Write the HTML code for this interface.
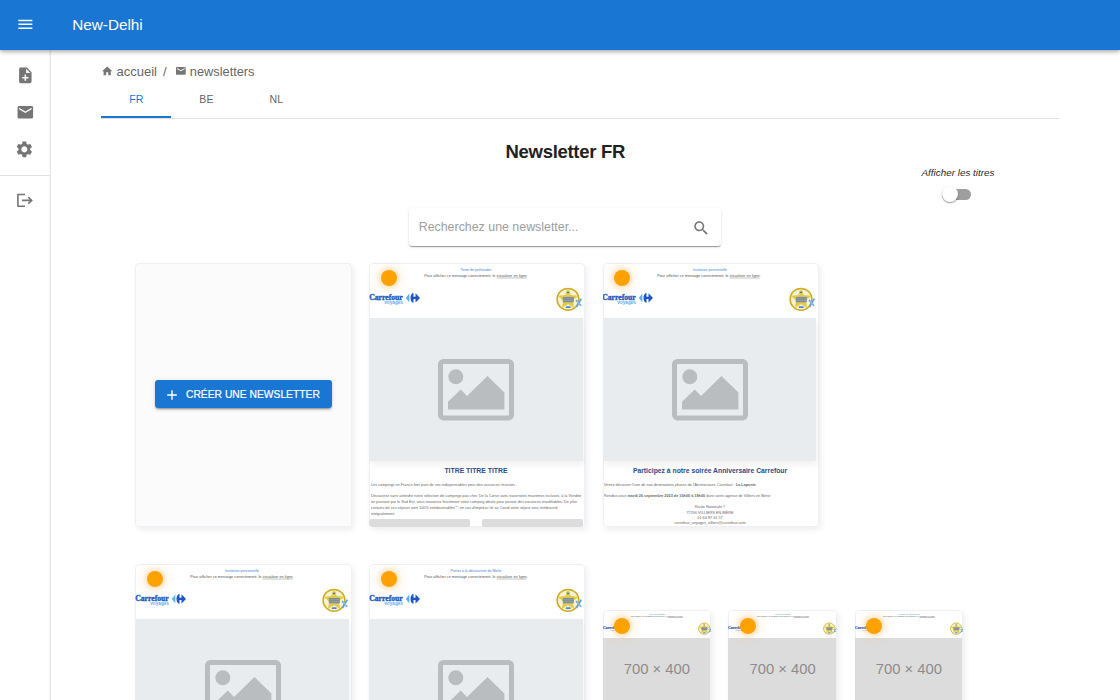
<!DOCTYPE html>
<html><head><meta charset="utf-8">
<style>
*{box-sizing:border-box;margin:0;padding:0}
html,body{width:1120px;height:700px;overflow:hidden;background:#fff;font-family:"Liberation Sans",sans-serif;position:relative}
.a{position:absolute}
.t{position:absolute;white-space:nowrap;line-height:1}
#appbar{left:0;top:0;width:1120px;height:49.7px;background:#1976d2;box-shadow:0 2px 3px -1px rgba(0,0,0,.18),0 3px 4px 0 rgba(0,0,0,.12),0 1px 7px 0 rgba(0,0,0,.1);z-index:5}
#side{left:0;top:49px;width:51px;height:651px;border-right:1px solid #e9e9e9;background:#fff;box-shadow:inset -1px 0 0 #f5f5f5}
.ico{position:absolute;fill:#757575}
.card{position:absolute;border-radius:4px;background:#fff;box-shadow:2px 3px 6px rgba(0,0,0,.07);overflow:hidden}
.card::before{content:"";position:absolute;left:0;top:0;right:0;bottom:0;border:1px solid #edf0f4;border-radius:4px;pointer-events:none}
.dot{position:absolute;width:16px;height:16px;border-radius:50%;background:#ffa200;box-shadow:0 0 3px 3px rgba(255,175,70,.2),0 0 8px 7px rgba(255,185,100,.11)}
</style></head><body>

<div id="appbar" class="a">
  <svg class="ico" style="left:15.6px;top:15.4px;fill:#fff" width="18.7" height="18.7" viewBox="0 0 24 24"><path d="M3 18h18v-2H3v2zm0-5h18v-2H3v2zm0-7v2h18V6H3z"/></svg>
  <div class="t" style="left:72.2px;top:17.2px;font-size:15.3px;color:#fff">New-Delhi</div>
</div>

<div id="side" class="a">
  <svg class="ico" style="left:15.6px;top:16.6px" width="18.7" height="18.7" viewBox="0 0 24 24"><path d="M14 2H6c-1.1 0-1.99.9-1.99 2L4 20c0 1.1.89 2 1.99 2H18c1.1 0 2-.9 2-2V8l-6-6zm2 14h-3v3h-2v-3H8v-2h3v-3h2v3h3v2zm-3-7V3.5L18.5 9H13z"/></svg>
  <svg class="ico" style="left:15.6px;top:54.1px" width="18.7" height="18.7" viewBox="0 0 24 24"><path d="M20 4H4c-1.1 0-1.99.9-1.99 2L2 18c0 1.1.9 2 2 2h16c1.1 0 2-.9 2-2V6c0-1.1-.9-2-2-2zm0 4l-8 5-8-5V6l8 5 8-5v2z"/></svg>
  <svg class="ico" style="left:15.3px;top:91.2px" width="18.7" height="18.7" viewBox="0 0 24 24"><path d="M19.43 12.98c.04-.32.07-.64.07-.98s-.03-.66-.07-.98l2.11-1.65c.19-.15.24-.42.12-.64l-2-3.46c-.12-.22-.39-.3-.61-.22l-2.49 1c-.52-.4-1.08-.73-1.69-.98l-.38-2.65C14.460 2.18 14.25 2 14 2h-4c-.25 0-.46.18-.49.42l-.38 2.65c-.61.25-1.17.59-1.69.98l-2.49-1c-.23-.09-.49 0-.61.22l-2 3.46c-.13.22-.07.49.12.64l2.11 1.65c-.04.32-.07.65-.07.98s.03.66.07.98l-2.11 1.65c-.19.15-.24.42-.12.64l2 3.46c.12.22.39.3.61.22l2.49-1c.52.4 1.080.73 1.69.98l.38 2.65c.03.24.24.42.49.42h4c.25 0 .46-.18.49-.42l.38-2.65c.61-.25 1.17-.59 1.69-.98l2.49 1c.23.09.49 0 .61-.22l2-3.46c.12-.22.07-.49-.12-.64l-2.11-1.65zM12 15.9c-2.15 0-3.9-1.75-3.9-3.9s1.75-3.9 3.9-3.9 3.9 1.75 3.9 3.9-1.75 3.9-3.9 3.9z"/></svg>
  <div class="a" style="left:0;top:126px;width:50px;height:1px;background:#e0e0e0"></div>
  <svg class="a" style="left:15px;top:142px" width="20" height="18" viewBox="0 0 20 18" fill="none" stroke="#757575" stroke-width="1.6"><path d="M10 3.5H2.9V15.3H10" stroke-linejoin="round"/><path d="M7 9.4H16.6M13.3 6l3.4 3.4-3.4 3.4"/></svg>
</div>

<!-- breadcrumb -->
<svg class="ico" style="left:101.1px;top:65.1px" width="12.4" height="12.4" viewBox="0 0 24 24"><path d="M10 20v-6h4v6h5v-8h3L12 3 2 12h3v8z"/></svg>
<div class="t" style="left:116.5px;top:64.6px;font-size:13px;color:#666">accueil</div>
<div class="t" style="left:163px;top:64.8px;font-size:13px;color:#666">/</div>
<svg class="ico" style="left:175px;top:65.4px" width="11.7" height="11.7" viewBox="0 0 24 24"><path d="M20 4H4c-1.1 0-1.99.9-1.99 2L2 18c0 1.1.9 2 2 2h16c1.1 0 2-.9 2-2V6c0-1.1-.9-2-2-2zm0 4l-8 5-8-5V6l8 5 8-5v2z"/></svg>
<div class="t" style="left:189.8px;top:65.5px;font-size:12.8px;color:#666">newsletters</div>

<!-- tabs -->
<div class="t" style="left:129.3px;top:94px;font-size:10.6px;letter-spacing:0.1px;color:#1976d2">FR</div>
<div class="t" style="left:199.3px;top:94px;font-size:10.6px;letter-spacing:0.1px;color:#666">BE</div>
<div class="t" style="left:269.5px;top:94px;font-size:10.6px;letter-spacing:0.1px;color:#666">NL</div>
<div class="a" style="left:101px;top:118px;width:958px;height:1px;background:#e0e0e0"></div>
<div class="a" style="left:101px;top:116px;width:70px;height:2px;background:#1976d2"></div>

<!-- title -->
<div class="t" style="left:505.5px;top:142.5px;font-size:18.5px;font-weight:bold;color:#212121;letter-spacing:-0.3px">Newsletter FR</div>

<!-- toggle -->
<div class="t" style="left:921.5px;top:167.9px;font-size:9.9px;font-style:italic;color:#2a2a2a">Afficher les titres</div>
<div class="a" style="left:942px;top:189px;width:29px;height:11px;border-radius:6px;background:#9e9e9e"></div>
<div class="a" style="left:942px;top:186.3px;width:16px;height:16px;border-radius:50%;background:#fff;box-shadow:0 1px 2px rgba(0,0,0,.3),0 1px 1px rgba(0,0,0,.14)"></div>

<!-- search -->
<div class="a" style="left:409px;top:208.2px;width:312px;height:38.3px;border-radius:3px;background:#fff;box-shadow:0 2px 1px -1px rgba(0,0,0,.24),0 1px 1px 0 rgba(0,0,0,.14),0 1px 3px 0 rgba(0,0,0,.12)"></div>
<div class="t" style="left:418.7px;top:221.3px;font-size:12.4px;color:#9e9e9e">Recherchez une newsletter...</div>
<svg class="ico" style="left:691.7px;top:218.6px" width="18.4" height="18.4" viewBox="0 0 24 24"><path d="M15.5 14h-.79l-.28-.27C15.41 12.59 16 11.11 16 9.5 16 5.91 13.09 3 9.5 3S3 5.91 3 9.5 5.91 16 9.5 16c1.61 0 3.09-.59 4.23-1.57l.27.28v.79l5 4.99L20.49 19l-4.99-5zm-6 0C7.01 14 5 11.99 5 9.5S7.01 5 9.5 5 14 7.01 14 9.5 11.99 14 9.5 14z"/></svg>

<!-- cards row 1 -->
<div class="card" style="left:135px;top:262.5px;width:216.5px;height:264px;background:#fbfbfb"></div>
<div class="a" style="left:155px;top:380.3px;width:177px;height:28.2px;border-radius:3px;background:#1976d2;box-shadow:0 3px 1px -2px rgba(0,0,0,.2),0 2px 2px 0 rgba(0,0,0,.14),0 1px 5px 0 rgba(0,0,0,.12)"></div>
<svg class="a" style="left:166px;top:389px" width="12" height="12" viewBox="0 0 12 12"><path d="M6 1.2v9.6M1.2 6h9.6" stroke="#fff" stroke-width="1.4"/></svg>
<div class="t" style="left:186px;top:390px;font-size:10.3px;color:#fff;letter-spacing:0px;-webkit-text-stroke:0.2px #fff">CRÉER UNE NEWSLETTER</div>

<div id="cards">
<div class="card" style="left:369.2px;top:262.5px;width:216px;height:264px">
<div class="t" style="left:-43px;width:1200px;text-align:center;top:5.2px;font-size:14.4px;color:#3b7fd9;transform-origin:0 0;transform:scale(0.25);">Texte de préheader</div>
<div class="t" style="left:-43.5px;width:1200px;text-align:center;top:11.1px;font-size:15.2px;color:#555;transform-origin:0 0;transform:scale(0.25);">Pour afficher ce message correctement, le <u style="text-decoration-thickness:1.6px;text-underline-offset:1.5px;text-decoration-color:#888">visualiser en ligne</u>.</div>
<svg class="a" style="left:-0.5px;top:29.5px" width="53.0" height="14.0" viewBox="0 0 53 14">
<text x="0.2" y="7.5" font-family="Liberation Serif" font-weight="bold" font-size="7.4" fill="#2459bf" stroke="#2459bf" stroke-width="0.35" textLength="33.6" lengthAdjust="spacingAndGlyphs">Carrefour</text>
<text x="15.2" y="11.8" font-family="Liberation Sans" font-weight="bold" font-size="5" fill="#62adf2" textLength="18.8" lengthAdjust="spacingAndGlyphs">voyages</text>
<path d="M40.3 1.5 L36.8 5.9 L40.3 10.2 Z" fill="#5aaef2"/>
<path d="M44.5 0.8 C42.2 1.6 41.5 4 41.5 5.9 C41.5 8 42.2 10.2 44.5 10.8 L44.5 7 L46.5 7 L46.5 10.6 L51 5.9 L46.5 1.2 L46.5 4.8 L44.5 4.8 Z" fill="#1f55c8"/>
</svg>
<svg class="a" style="left:186.5px;top:24.700000000000003px" width="27.0" height="24" viewBox="-0.5 -0.5 27 24">
<circle cx="11.5" cy="11.8" r="10.9" fill="#f8f1d2" stroke="#cdab1e" stroke-width="1.5"/>
<path d="M11.5 0.6 L14.3 7.6 L21.8 8.3 L16.2 13.2 L17.8 20.6 L11.5 16.8 L5.2 20.6 L6.8 13.2 L1.2 8.3 L8.7 7.6 Z" fill="#e2cd4a"/>
<path d="M9.6 4.3 h3.8 l-1.9 1.6z" fill="#4a6fb0"/>
<rect x="6.3" y="9.4" width="11" height="5.4" fill="#7d8ca5"/>
<path d="M6.3 11.2h11M6.3 13h11" stroke="#c9c070" stroke-width="0.5" opacity=".7"/>
<rect x="9.3" y="18.8" width="4.8" height="1.7" rx="0.5" fill="#4b86dc"/>
<path d="M19.6 12.6 L24.6 18.2 M24.8 11.2 L20 19.6" stroke="#5aa4ec" stroke-width="1.7"/>
<path d="M20.2 13.4 L24 17.6" stroke="#fff" stroke-width="0.5"/>
</svg>
<div class="a" style="left:0px;top:55.2px;width:213.5px;height:143.8px;background:#e9ecef;box-shadow:1px 4px 7px rgba(0,0,0,.06)"></div>
<svg class="a" style="left:69.1px;top:96.8px" width="76" height="61.4" viewBox="0 0 76 61.4">
<rect x="2.5" y="2.5" width="71" height="56.4" rx="3" fill="none" stroke="#babdc0" stroke-width="5"/>
<circle cx="17.8" cy="17.8" r="7.5" fill="#babdc0"/>
<path d="M10 42.7 L22.8 30.6 L29 37 L49.5 17 L66.4 33.5 L66.4 50.6 L10 50.6 Z" fill="#babdc0"/>
</svg>
<div class="t" style="left:-43.5px;width:1200px;text-align:center;top:204.75px;font-size:27.6px;color:#2b4a8a;transform-origin:0 0;transform:scale(0.25);font-weight:bold;letter-spacing:-0.1px">TITRE TITRE TITRE</div>
<div class="t" style="left:1.5px;top:220.7px;font-size:15.2px;color:#666;transform-origin:0 0;transform:scale(0.25);">Les campings en France font parti de vos indispensables pour des vacances réussies .</div>
<div class="t" style="left:1.5px;top:231.5px;font-size:15.2px;color:#666;transform-origin:0 0;transform:scale(0.25);">Découvrez sans attendre notre sélection de campings pas cher. De la Corse avec traversées maritimes incluses, à la Vendée</div>
<div class="t" style="left:1.5px;top:237.2px;font-size:15.2px;color:#666;transform-origin:0 0;transform:scale(0.25);">en passant par le Sud Est, vous trouverez forcément votre camping idéale pour passer des vacances inoubliables. De plus</div>
<div class="t" style="left:1.5px;top:243.3px;font-size:15.2px;color:#666;transform-origin:0 0;transform:scale(0.25);">certains de ces séjours sont 100% remboursables<span style='font-size:60%;vertical-align:top;line-height:0'>(2)</span>, en cas d'imprévu lié au Covid votre séjour sera remboursé</div>
<div class="t" style="left:1.5px;top:249.1px;font-size:15.2px;color:#666;transform-origin:0 0;transform:scale(0.25);">intégralement.</div>
<div class="a" style="left:0;top:256.8px;width:101px;height:8px;border-radius:2px;background:#dcdcdc"></div>
<div class="a" style="left:112.4px;top:256.8px;width:101.5px;height:8px;border-radius:2px;background:#dcdcdc"></div>
<div class="dot" style="left:11.5px;top:7.300000000000001px"></div>
</div>
<div class="card" style="left:602.5px;top:262.5px;width:216px;height:264px">
<div class="t" style="left:-43px;width:1200px;text-align:center;top:5.2px;font-size:14.4px;color:#3b7fd9;transform-origin:0 0;transform:scale(0.25);">Invitation personnelle</div>
<div class="t" style="left:-43.5px;width:1200px;text-align:center;top:11.1px;font-size:15.2px;color:#555;transform-origin:0 0;transform:scale(0.25);">Pour afficher ce message correctement, le <u style="text-decoration-thickness:1.6px;text-underline-offset:1.5px;text-decoration-color:#888">visualiser en ligne</u>.</div>
<svg class="a" style="left:-0.5px;top:29.5px" width="53.0" height="14.0" viewBox="0 0 53 14">
<text x="0.2" y="7.5" font-family="Liberation Serif" font-weight="bold" font-size="7.4" fill="#2459bf" stroke="#2459bf" stroke-width="0.35" textLength="33.6" lengthAdjust="spacingAndGlyphs">Carrefour</text>
<text x="15.2" y="11.8" font-family="Liberation Sans" font-weight="bold" font-size="5" fill="#62adf2" textLength="18.8" lengthAdjust="spacingAndGlyphs">voyages</text>
<path d="M40.3 1.5 L36.8 5.9 L40.3 10.2 Z" fill="#5aaef2"/>
<path d="M44.5 0.8 C42.2 1.6 41.5 4 41.5 5.9 C41.5 8 42.2 10.2 44.5 10.8 L44.5 7 L46.5 7 L46.5 10.6 L51 5.9 L46.5 1.2 L46.5 4.8 L44.5 4.8 Z" fill="#1f55c8"/>
</svg>
<svg class="a" style="left:186.5px;top:24.700000000000003px" width="27.0" height="24" viewBox="-0.5 -0.5 27 24">
<circle cx="11.5" cy="11.8" r="10.9" fill="#f8f1d2" stroke="#cdab1e" stroke-width="1.5"/>
<path d="M11.5 0.6 L14.3 7.6 L21.8 8.3 L16.2 13.2 L17.8 20.6 L11.5 16.8 L5.2 20.6 L6.8 13.2 L1.2 8.3 L8.7 7.6 Z" fill="#e2cd4a"/>
<path d="M9.6 4.3 h3.8 l-1.9 1.6z" fill="#4a6fb0"/>
<rect x="6.3" y="9.4" width="11" height="5.4" fill="#7d8ca5"/>
<path d="M6.3 11.2h11M6.3 13h11" stroke="#c9c070" stroke-width="0.5" opacity=".7"/>
<rect x="9.3" y="18.8" width="4.8" height="1.7" rx="0.5" fill="#4b86dc"/>
<path d="M19.6 12.6 L24.6 18.2 M24.8 11.2 L20 19.6" stroke="#5aa4ec" stroke-width="1.7"/>
<path d="M20.2 13.4 L24 17.6" stroke="#fff" stroke-width="0.5"/>
</svg>
<div class="a" style="left:0px;top:55.2px;width:213.5px;height:143.8px;background:#e9ecef;box-shadow:1px 4px 7px rgba(0,0,0,.06)"></div>
<svg class="a" style="left:69.1px;top:96.8px" width="76" height="61.4" viewBox="0 0 76 61.4">
<rect x="2.5" y="2.5" width="71" height="56.4" rx="3" fill="none" stroke="#babdc0" stroke-width="5"/>
<circle cx="17.8" cy="17.8" r="7.5" fill="#babdc0"/>
<path d="M10 42.7 L22.8 30.6 L29 37 L49.5 17 L66.4 33.5 L66.4 50.6 L10 50.6 Z" fill="#babdc0"/>
</svg>
<div class="t" style="left:-42.8px;width:1200px;text-align:center;top:204.79999999999998px;font-size:27.2px;color:#2b4a8a;transform-origin:0 0;transform:scale(0.25);font-weight:bold">Participez à notre soirée Anniversaire Carrefour</div>
<div class="t" style="left:1.9px;top:220.8px;font-size:15.2px;color:#666;transform-origin:0 0;transform:scale(0.25);">Venez découvrir l'une de nos destinations phares de l'Anniversaire Carrefour : <b>La Laponie</b></div>
<div class="t" style="left:1.9px;top:231.5px;font-size:15.2px;color:#666;transform-origin:0 0;transform:scale(0.25);">Rendez-vous <b>mardi 26 septembre 2023 de 16h00 à 18h00</b> dans votre agence de Villiers en Bière :</div>
<div class="t" style="left:-42.5px;width:1200px;text-align:center;top:242.79999999999998px;font-size:15.2px;color:#666;transform-origin:0 0;transform:scale(0.25);">Route Nationale 7</div>
<div class="t" style="left:-42.5px;width:1200px;text-align:center;top:248.2px;font-size:15.2px;color:#666;transform-origin:0 0;transform:scale(0.25);">77190 VILLIERS EN BIÈRE</div>
<div class="t" style="left:-42.5px;width:1200px;text-align:center;top:253.5px;font-size:15.2px;color:#666;transform-origin:0 0;transform:scale(0.25);">01 64 87 41 57</div>
<div class="t" style="left:-42.5px;width:1200px;text-align:center;top:258.90000000000003px;font-size:15.2px;color:#666;transform-origin:0 0;transform:scale(0.25);">carrefour_voyages_villiers@carrefour.com</div>
<div class="dot" style="left:11.5px;top:7.300000000000001px"></div>
</div>
<div class="card" style="left:135px;top:563.5px;width:216.5px;height:160px">
<div class="t" style="left:-43px;width:1200px;text-align:center;top:5.2px;font-size:14.4px;color:#3b7fd9;transform-origin:0 0;transform:scale(0.25);">Invitation personnelle</div>
<div class="t" style="left:-43.5px;width:1200px;text-align:center;top:11.1px;font-size:15.2px;color:#555;transform-origin:0 0;transform:scale(0.25);">Pour afficher ce message correctement, le <u style="text-decoration-thickness:1.6px;text-underline-offset:1.5px;text-decoration-color:#888">visualiser en ligne</u>.</div>
<svg class="a" style="left:-0.5px;top:29.5px" width="53.0" height="14.0" viewBox="0 0 53 14">
<text x="0.2" y="7.5" font-family="Liberation Serif" font-weight="bold" font-size="7.4" fill="#2459bf" stroke="#2459bf" stroke-width="0.35" textLength="33.6" lengthAdjust="spacingAndGlyphs">Carrefour</text>
<text x="15.2" y="11.8" font-family="Liberation Sans" font-weight="bold" font-size="5" fill="#62adf2" textLength="18.8" lengthAdjust="spacingAndGlyphs">voyages</text>
<path d="M40.3 1.5 L36.8 5.9 L40.3 10.2 Z" fill="#5aaef2"/>
<path d="M44.5 0.8 C42.2 1.6 41.5 4 41.5 5.9 C41.5 8 42.2 10.2 44.5 10.8 L44.5 7 L46.5 7 L46.5 10.6 L51 5.9 L46.5 1.2 L46.5 4.8 L44.5 4.8 Z" fill="#1f55c8"/>
</svg>
<svg class="a" style="left:186.5px;top:24.700000000000003px" width="27.0" height="24" viewBox="-0.5 -0.5 27 24">
<circle cx="11.5" cy="11.8" r="10.9" fill="#f8f1d2" stroke="#cdab1e" stroke-width="1.5"/>
<path d="M11.5 0.6 L14.3 7.6 L21.8 8.3 L16.2 13.2 L17.8 20.6 L11.5 16.8 L5.2 20.6 L6.8 13.2 L1.2 8.3 L8.7 7.6 Z" fill="#e2cd4a"/>
<path d="M9.6 4.3 h3.8 l-1.9 1.6z" fill="#4a6fb0"/>
<rect x="6.3" y="9.4" width="11" height="5.4" fill="#7d8ca5"/>
<path d="M6.3 11.2h11M6.3 13h11" stroke="#c9c070" stroke-width="0.5" opacity=".7"/>
<rect x="9.3" y="18.8" width="4.8" height="1.7" rx="0.5" fill="#4b86dc"/>
<path d="M19.6 12.6 L24.6 18.2 M24.8 11.2 L20 19.6" stroke="#5aa4ec" stroke-width="1.7"/>
<path d="M20.2 13.4 L24 17.6" stroke="#fff" stroke-width="0.5"/>
</svg>
<div class="a" style="left:0.5px;top:55.2px;width:213.5px;height:143.8px;background:#e9ecef;box-shadow:1px 4px 7px rgba(0,0,0,.06)"></div>
<svg class="a" style="left:69.6px;top:96.8px" width="76" height="61.4" viewBox="0 0 76 61.4">
<rect x="2.5" y="2.5" width="71" height="56.4" rx="3" fill="none" stroke="#babdc0" stroke-width="5"/>
<circle cx="17.8" cy="17.8" r="7.5" fill="#babdc0"/>
<path d="M10 42.7 L22.8 30.6 L29 37 L49.5 17 L66.4 33.5 L66.4 50.6 L10 50.6 Z" fill="#babdc0"/>
</svg>

<div class="dot" style="left:11.5px;top:7.300000000000001px"></div>
</div>
<div class="card" style="left:369.2px;top:563.5px;width:216px;height:160px">
<div class="t" style="left:-43px;width:1200px;text-align:center;top:5.2px;font-size:14.4px;color:#3b7fd9;transform-origin:0 0;transform:scale(0.25);">Partez à la découverte de Malte</div>
<div class="t" style="left:-43.5px;width:1200px;text-align:center;top:11.1px;font-size:15.2px;color:#555;transform-origin:0 0;transform:scale(0.25);">Pour afficher ce message correctement, le <u style="text-decoration-thickness:1.6px;text-underline-offset:1.5px;text-decoration-color:#888">visualiser en ligne</u>.</div>
<svg class="a" style="left:-0.5px;top:29.5px" width="53.0" height="14.0" viewBox="0 0 53 14">
<text x="0.2" y="7.5" font-family="Liberation Serif" font-weight="bold" font-size="7.4" fill="#2459bf" stroke="#2459bf" stroke-width="0.35" textLength="33.6" lengthAdjust="spacingAndGlyphs">Carrefour</text>
<text x="15.2" y="11.8" font-family="Liberation Sans" font-weight="bold" font-size="5" fill="#62adf2" textLength="18.8" lengthAdjust="spacingAndGlyphs">voyages</text>
<path d="M40.3 1.5 L36.8 5.9 L40.3 10.2 Z" fill="#5aaef2"/>
<path d="M44.5 0.8 C42.2 1.6 41.5 4 41.5 5.9 C41.5 8 42.2 10.2 44.5 10.8 L44.5 7 L46.5 7 L46.5 10.6 L51 5.9 L46.5 1.2 L46.5 4.8 L44.5 4.8 Z" fill="#1f55c8"/>
</svg>
<svg class="a" style="left:186.5px;top:24.700000000000003px" width="27.0" height="24" viewBox="-0.5 -0.5 27 24">
<circle cx="11.5" cy="11.8" r="10.9" fill="#f8f1d2" stroke="#cdab1e" stroke-width="1.5"/>
<path d="M11.5 0.6 L14.3 7.6 L21.8 8.3 L16.2 13.2 L17.8 20.6 L11.5 16.8 L5.2 20.6 L6.8 13.2 L1.2 8.3 L8.7 7.6 Z" fill="#e2cd4a"/>
<path d="M9.6 4.3 h3.8 l-1.9 1.6z" fill="#4a6fb0"/>
<rect x="6.3" y="9.4" width="11" height="5.4" fill="#7d8ca5"/>
<path d="M6.3 11.2h11M6.3 13h11" stroke="#c9c070" stroke-width="0.5" opacity=".7"/>
<rect x="9.3" y="18.8" width="4.8" height="1.7" rx="0.5" fill="#4b86dc"/>
<path d="M19.6 12.6 L24.6 18.2 M24.8 11.2 L20 19.6" stroke="#5aa4ec" stroke-width="1.7"/>
<path d="M20.2 13.4 L24 17.6" stroke="#fff" stroke-width="0.5"/>
</svg>
<div class="a" style="left:0px;top:55.2px;width:213.5px;height:143.8px;background:#e9ecef;box-shadow:1px 4px 7px rgba(0,0,0,.06)"></div>
<svg class="a" style="left:69.1px;top:96.8px" width="76" height="61.4" viewBox="0 0 76 61.4">
<rect x="2.5" y="2.5" width="71" height="56.4" rx="3" fill="none" stroke="#babdc0" stroke-width="5"/>
<circle cx="17.8" cy="17.8" r="7.5" fill="#babdc0"/>
<path d="M10 42.7 L22.8 30.6 L29 37 L49.5 17 L66.4 33.5 L66.4 50.6 L10 50.6 Z" fill="#babdc0"/>
</svg>

<div class="dot" style="left:11.5px;top:7.300000000000001px"></div>
</div>
<div class="card" style="left:602.5px;top:610.3px;width:108.8px;height:100px">
<div class="t" style="left:-95.7px;width:1200px;text-align:center;top:2.2750000000000004px;font-size:7.4px;color:#3b7fd9;transform-origin:0 0;transform:scale(0.25);">Texte de préheader</div>
<div class="t" style="left:-95.7px;width:1200px;text-align:center;top:5.135px;font-size:7.72px;color:#555;transform-origin:0 0;transform:scale(0.25);">Pour afficher ce message correctement, le <u style="text-decoration-thickness:1.6px;text-underline-offset:1.5px;text-decoration-color:#888">visualiser en ligne</u>.</div>
<svg class="a" style="left:0px;top:14.5px" width="26.5" height="7.0" viewBox="0 0 53 14">
<text x="0.2" y="7.5" font-family="Liberation Serif" font-weight="bold" font-size="7.4" fill="#2459bf" stroke="#2459bf" stroke-width="0.35" textLength="33.6" lengthAdjust="spacingAndGlyphs">Carrefour</text>
<text x="15.2" y="11.8" font-family="Liberation Sans" font-weight="bold" font-size="5" fill="#62adf2" textLength="18.8" lengthAdjust="spacingAndGlyphs">voyages</text>
<path d="M40.3 1.5 L36.8 5.9 L40.3 10.2 Z" fill="#5aaef2"/>
<path d="M44.5 0.8 C42.2 1.6 41.5 4 41.5 5.9 C41.5 8 42.2 10.2 44.5 10.8 L44.5 7 L46.5 7 L46.5 10.6 L51 5.9 L46.5 1.2 L46.5 4.8 L44.5 4.8 Z" fill="#1f55c8"/>
</svg>
<svg class="a" style="left:95.0px;top:12.2px" width="14.08695652173913" height="13" viewBox="-0.5 -0.5 27 24">
<circle cx="11.5" cy="11.8" r="10.9" fill="#f8f1d2" stroke="#cdab1e" stroke-width="1.5"/>
<path d="M11.5 0.6 L14.3 7.6 L21.8 8.3 L16.2 13.2 L17.8 20.6 L11.5 16.8 L5.2 20.6 L6.8 13.2 L1.2 8.3 L8.7 7.6 Z" fill="#e2cd4a"/>
<path d="M9.6 4.3 h3.8 l-1.9 1.6z" fill="#4a6fb0"/>
<rect x="6.3" y="9.4" width="11" height="5.4" fill="#7d8ca5"/>
<path d="M6.3 11.2h11M6.3 13h11" stroke="#c9c070" stroke-width="0.5" opacity=".7"/>
<rect x="9.3" y="18.8" width="4.8" height="1.7" rx="0.5" fill="#4b86dc"/>
<path d="M19.6 12.6 L24.6 18.2 M24.8 11.2 L20 19.6" stroke="#5aa4ec" stroke-width="1.7"/>
<path d="M20.2 13.4 L24 17.6" stroke="#fff" stroke-width="0.5"/>
</svg>
<div class="a" style="left:0;top:28px;width:107.3px;height:100px;background:#dcdcdc"></div>
<div class="t" style="left:0.8px;width:107px;text-align:center;top:51.599999999999994px;font-size:14.8px;color:#8c8c8c">700 × 400</div>
<div class="dot" style="left:11.7px;top:7.300000000000001px"></div>
</div>
<div class="card" style="left:728.3px;top:610.3px;width:108.8px;height:100px">
<div class="t" style="left:-95.7px;width:1200px;text-align:center;top:2.2750000000000004px;font-size:7.4px;color:#3b7fd9;transform-origin:0 0;transform:scale(0.25);">Texte de préheader</div>
<div class="t" style="left:-95.7px;width:1200px;text-align:center;top:5.135px;font-size:7.72px;color:#555;transform-origin:0 0;transform:scale(0.25);">Pour afficher ce message correctement, le <u style="text-decoration-thickness:1.6px;text-underline-offset:1.5px;text-decoration-color:#888">visualiser en ligne</u>.</div>
<svg class="a" style="left:0px;top:14.5px" width="26.5" height="7.0" viewBox="0 0 53 14">
<text x="0.2" y="7.5" font-family="Liberation Serif" font-weight="bold" font-size="7.4" fill="#2459bf" stroke="#2459bf" stroke-width="0.35" textLength="33.6" lengthAdjust="spacingAndGlyphs">Carrefour</text>
<text x="15.2" y="11.8" font-family="Liberation Sans" font-weight="bold" font-size="5" fill="#62adf2" textLength="18.8" lengthAdjust="spacingAndGlyphs">voyages</text>
<path d="M40.3 1.5 L36.8 5.9 L40.3 10.2 Z" fill="#5aaef2"/>
<path d="M44.5 0.8 C42.2 1.6 41.5 4 41.5 5.9 C41.5 8 42.2 10.2 44.5 10.8 L44.5 7 L46.5 7 L46.5 10.6 L51 5.9 L46.5 1.2 L46.5 4.8 L44.5 4.8 Z" fill="#1f55c8"/>
</svg>
<svg class="a" style="left:95.0px;top:12.2px" width="14.08695652173913" height="13" viewBox="-0.5 -0.5 27 24">
<circle cx="11.5" cy="11.8" r="10.9" fill="#f8f1d2" stroke="#cdab1e" stroke-width="1.5"/>
<path d="M11.5 0.6 L14.3 7.6 L21.8 8.3 L16.2 13.2 L17.8 20.6 L11.5 16.8 L5.2 20.6 L6.8 13.2 L1.2 8.3 L8.7 7.6 Z" fill="#e2cd4a"/>
<path d="M9.6 4.3 h3.8 l-1.9 1.6z" fill="#4a6fb0"/>
<rect x="6.3" y="9.4" width="11" height="5.4" fill="#7d8ca5"/>
<path d="M6.3 11.2h11M6.3 13h11" stroke="#c9c070" stroke-width="0.5" opacity=".7"/>
<rect x="9.3" y="18.8" width="4.8" height="1.7" rx="0.5" fill="#4b86dc"/>
<path d="M19.6 12.6 L24.6 18.2 M24.8 11.2 L20 19.6" stroke="#5aa4ec" stroke-width="1.7"/>
<path d="M20.2 13.4 L24 17.6" stroke="#fff" stroke-width="0.5"/>
</svg>
<div class="a" style="left:0;top:28px;width:107.3px;height:100px;background:#dcdcdc"></div>
<div class="t" style="left:0.8px;width:107px;text-align:center;top:51.599999999999994px;font-size:14.8px;color:#8c8c8c">700 × 400</div>
<div class="dot" style="left:11.7px;top:7.300000000000001px"></div>
</div>
<div class="card" style="left:854.6px;top:610.3px;width:108.8px;height:100px">
<div class="t" style="left:-95.7px;width:1200px;text-align:center;top:2.2750000000000004px;font-size:7.4px;color:#3b7fd9;transform-origin:0 0;transform:scale(0.25);">Le Supp. de nos connaître</div>
<div class="t" style="left:-95.7px;width:1200px;text-align:center;top:5.135px;font-size:7.72px;color:#555;transform-origin:0 0;transform:scale(0.25);">Pour afficher ce message correctement, le <u style="text-decoration-thickness:1.6px;text-underline-offset:1.5px;text-decoration-color:#888">visualiser en ligne</u>.</div>
<svg class="a" style="left:0px;top:14.5px" width="26.5" height="7.0" viewBox="0 0 53 14">
<text x="0.2" y="7.5" font-family="Liberation Serif" font-weight="bold" font-size="7.4" fill="#2459bf" stroke="#2459bf" stroke-width="0.35" textLength="33.6" lengthAdjust="spacingAndGlyphs">Carrefour</text>
<text x="15.2" y="11.8" font-family="Liberation Sans" font-weight="bold" font-size="5" fill="#62adf2" textLength="18.8" lengthAdjust="spacingAndGlyphs">voyages</text>
<path d="M40.3 1.5 L36.8 5.9 L40.3 10.2 Z" fill="#5aaef2"/>
<path d="M44.5 0.8 C42.2 1.6 41.5 4 41.5 5.9 C41.5 8 42.2 10.2 44.5 10.8 L44.5 7 L46.5 7 L46.5 10.6 L51 5.9 L46.5 1.2 L46.5 4.8 L44.5 4.8 Z" fill="#1f55c8"/>
</svg>
<svg class="a" style="left:95.0px;top:12.2px" width="14.08695652173913" height="13" viewBox="-0.5 -0.5 27 24">
<circle cx="11.5" cy="11.8" r="10.9" fill="#f8f1d2" stroke="#cdab1e" stroke-width="1.5"/>
<path d="M11.5 0.6 L14.3 7.6 L21.8 8.3 L16.2 13.2 L17.8 20.6 L11.5 16.8 L5.2 20.6 L6.8 13.2 L1.2 8.3 L8.7 7.6 Z" fill="#e2cd4a"/>
<path d="M9.6 4.3 h3.8 l-1.9 1.6z" fill="#4a6fb0"/>
<rect x="6.3" y="9.4" width="11" height="5.4" fill="#7d8ca5"/>
<path d="M6.3 11.2h11M6.3 13h11" stroke="#c9c070" stroke-width="0.5" opacity=".7"/>
<rect x="9.3" y="18.8" width="4.8" height="1.7" rx="0.5" fill="#4b86dc"/>
<path d="M19.6 12.6 L24.6 18.2 M24.8 11.2 L20 19.6" stroke="#5aa4ec" stroke-width="1.7"/>
<path d="M20.2 13.4 L24 17.6" stroke="#fff" stroke-width="0.5"/>
</svg>
<div class="a" style="left:0;top:28px;width:107.3px;height:100px;background:#dcdcdc"></div>
<div class="t" style="left:0.8px;width:107px;text-align:center;top:51.599999999999994px;font-size:14.8px;color:#8c8c8c">700 × 400</div>
<div class="dot" style="left:11.7px;top:7.300000000000001px"></div>
</div>
</div><!--/cards-->
</body></html>
